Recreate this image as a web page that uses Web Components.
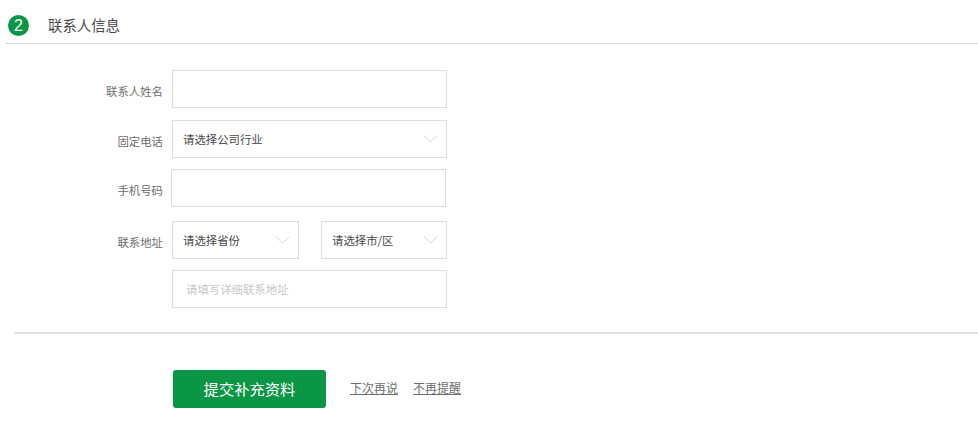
<!DOCTYPE html>
<html lang="zh">
<head>
<meta charset="utf-8">
<title>联系人信息</title>
<style>
    html, body { margin: 0; background: #fff; }
    body { font-family: "Noto Sans CJK SC", "Liberation Sans", sans-serif; font-size: 12px; color: #444; }
    contact-form { width: 978px; height: 427px; }
</style>
</head>
<body>
<contact-form>
    <step-heading step="2">联系人信息</step-heading>
    <form-row label="联系人姓名" gap="26"><text-box></text-box></form-row>
    <form-row label="固定电话" gap="12"><select-box>请选择公司行业</select-box></form-row>
    <form-row label="手机号码" gap="11" shift="-1"><text-box></text-box></form-row>
    <form-row label="联系地址" gap="14">
        <select-box width="127">请选择省份</select-box>
        <select-box width="126">请选择市/区</select-box>
    </form-row>
    <form-row gap="11"><text-box placeholder="请填写详细联系地址"></text-box></form-row>
    <action-bar>
        <a href="#" slot="primary">提交补充资料</a>
        <a href="#">下次再说</a>
        <a href="#">不再提醒</a>
    </action-bar>
</contact-form>

<script>
/**
 * Section title with the round green step number.
 */
class StepHeading extends HTMLElement {
    constructor() {
        super();

        this.$shadowDom = this.attachShadow({ mode: 'open' });
    }

    connectedCallback() {
        this.$shadowDom.innerHTML = `
            <style>
                :host {
                    display: flex;
                    align-items: center;
                    box-sizing: border-box;
                    height: 44px;
                    margin-left: 5px;
                    padding: 7px 0 0 3px;
                    border-bottom: 1px solid #d9d9d9;
                    font-size: 14.4px;
                    color: #4a4a4a;
                }
                .num {
                    width: 21px;
                    height: 21px;
                    margin-right: 19px;
                    border-radius: 50%;
                    background: #0b9645;
                    color: #fff;
                    font-family: "Liberation Sans", sans-serif;
                    font-size: 16px;
                    line-height: 21px;
                    text-align: center;
                }
                .title { margin-bottom: 2px; }
            </style>
            <span class="num">${this.getAttribute('step')}</span>
            <span class="title"><slot></slot></span>
        `;
    }
}

/**
 * Label on the left, one or more fields on the right.
 */
class FormRow extends HTMLElement {
    constructor() {
        super();

        this.$shadowDom = this.attachShadow({ mode: 'open' });
    }

    connectedCallback() {
        const gap = this.getAttribute('gap') || 0;
        const shift = this.getAttribute('shift') || 0;

        this.$shadowDom.innerHTML = `
            <style>
                :host {
                    display: flex;
                    align-items: center;
                    margin-top: ${gap}px;
                }
                .label {
                    width: 163px;
                    margin-right: ${9 + Number(shift)}px;
                    padding-top: 3px;
                    text-align: right;
                    font-size: 11.4px;
                    color: #6e6e6e;
                }
                .fields { display: flex; gap: 22px; }
            </style>
            <span class="label">${this.getAttribute('label') || ''}</span>
            <div class="fields"><slot></slot></div>
        `;
    }
}

/**
 * Empty text field, with an optional placeholder.
 */
class TextBox extends HTMLElement {
    constructor() {
        super();

        this.$shadowDom = this.attachShadow({ mode: 'open' });
    }

    connectedCallback() {
        this.$shadowDom.innerHTML = `
            <style>
                :host {
                    display: flex;
                    align-items: center;
                    box-sizing: border-box;
                    width: 275px;
                    height: 38px;
                    padding-left: 13px;
                    border: 1px solid #dedede;
                    background: #fff;
                    font-size: 11.4px;
                    color: #c8c8c8;
                }
            </style>
            <span>${this.getAttribute('placeholder') || ''}</span>
        `;
    }
}

/**
 * Drop-down field, closed, with its thin chevron.
 */
class SelectBox extends HTMLElement {
    constructor() {
        super();

        this.$shadowDom = this.attachShadow({ mode: 'open' });
    }

    connectedCallback() {
        this.$shadowDom.innerHTML = `
            <style>
                :host {
                    display: flex;
                    align-items: center;
                    justify-content: space-between;
                    box-sizing: border-box;
                    width: ${this.getAttribute('width') || 275}px;
                    height: 38px;
                    padding: 0 8px 0 10px;
                    border: 1px solid #dedede;
                    background: #fff;
                    font-size: 11.4px;
                    color: #4a4a4a;
                }
                svg { display: block; }
            </style>
            <slot></slot>
            <svg width="15" height="8" viewBox="0 0 15 8" fill="none">
                <path d="M1 .8 7.5 7 14 .8" stroke="#d6d6d6" stroke-width="1"/>
            </svg>
        `;
    }
}

/**
 * Rule across the page, then the submit button and the text links.
 */
class ActionBar extends HTMLElement {
    constructor() {
        super();

        this.$shadowDom = this.attachShadow({ mode: 'open' });
    }

    connectedCallback() {
        this.$shadowDom.innerHTML = `
            <style>
                :host { display: block; margin: 24px 0 0 14px; }
                .rule { border-top: 2px solid #e2e2e2; }
                .row {
                    display: flex;
                    align-items: center;
                    margin: 36px 0 0 159px;
                    gap: 15px;
                    font-size: 12px;
                    color: #666;
                }
                ::slotted(a) {
                    margin-bottom: 4px;
                    color: #6e6e6e;
                    text-decoration: underline;
                }
                ::slotted(a[slot="primary"]) {
                    display: block;
                    width: 153px;
                    height: 38px;
                    margin: 0 9px 0 0;
                    border-radius: 3px;
                    background: #0b9645;
                    color: #fff;
                    font-size: 15.3px;
                    line-height: 37px;
                    text-align: center;
                    text-decoration: none;
                }
            </style>
            <div class="rule"></div>
            <div class="row">
                <slot name="primary"></slot>
                <slot></slot>
            </div>
        `;
    }
}

class ContactForm extends HTMLElement {
    constructor() {
        super();

        this.$shadowDom = this.attachShadow({ mode: 'open' });
        this.$shadowDom.innerHTML = `
            <style>
                :host { display: block; overflow: hidden; }
            </style>
            <slot></slot>
        `;
    }
}

customElements.define('step-heading', StepHeading);
customElements.define('form-row', FormRow);
customElements.define('text-box', TextBox);
customElements.define('select-box', SelectBox);
customElements.define('action-bar', ActionBar);
customElements.define('contact-form', ContactForm);
</script>
</body>
</html>
